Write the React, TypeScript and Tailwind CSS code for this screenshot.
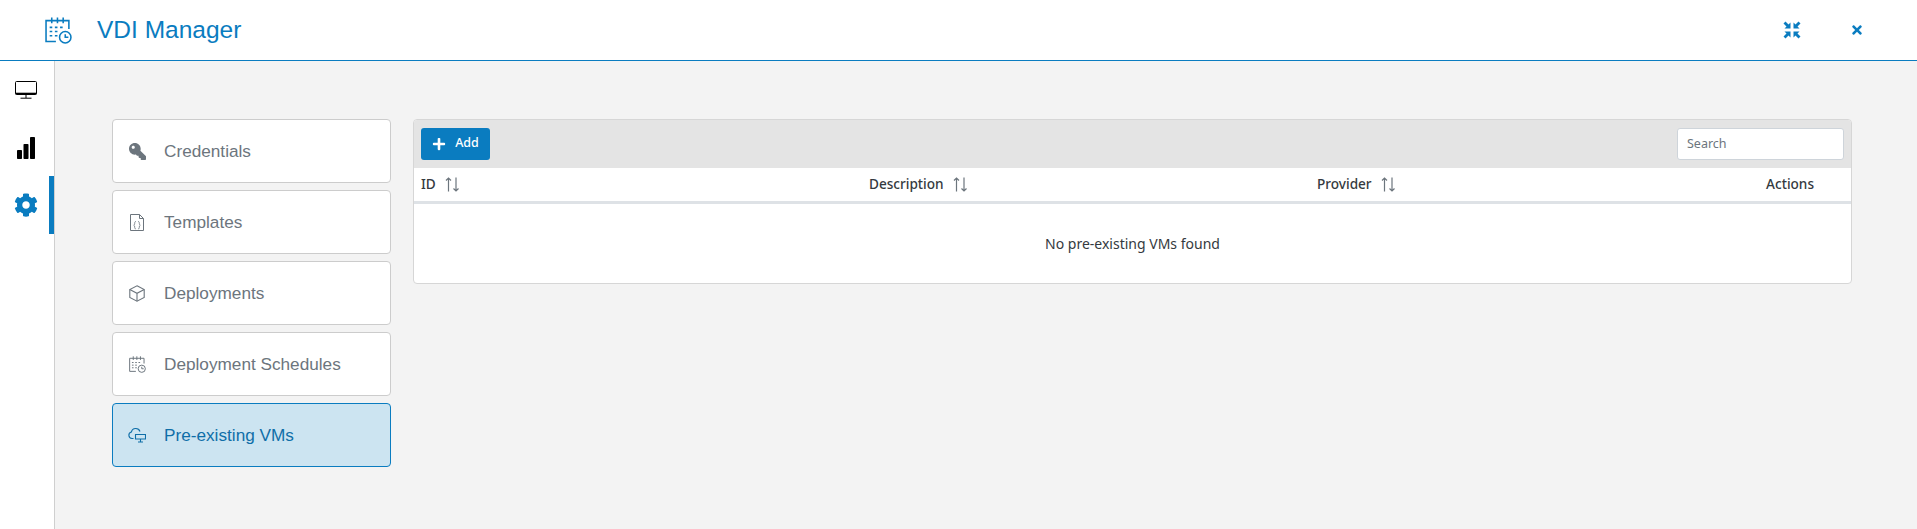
import React from "react";
import { FaKey, FaCog, FaPlus, FaTimes } from "react-icons/fa";

const CalendarClock = ({ className }: { className?: string }) => (
  <svg viewBox="0 0 26 26" className={className} fill="none" stroke="currentColor" strokeWidth="1.500">
    <path d="M10.500 23.500H1V3.500h22V11.500" />
    <path d="M6.500 0.500v5.500M12 0.500v5.500M17.500 0.500v5.500" />
    <path d="M4.500 10h2.500M9.500 10h2.500M14.500 10h2.500M4.500 14h2.500M9.500 14h2.500M4.500 18h2.500M9.500 18h2.500" />
    <circle cx="19.500" cy="19.500" r="5.500" />
    <path d="M19.500 16.500v3h3" />
  </svg>
);

const Monitor = ({ className }: { className?: string }) => (
  <svg viewBox="0 0 22 18" className={className} fill="none" stroke="currentColor">
    <rect x="0.500" y="0.500" width="21" height="13" rx="1" strokeWidth="1" />
    <path d="M0.500 12.500h21" strokeWidth="1.600" />
    <path d="M11 14v3M5.500 17.200h11" strokeWidth="1" />
  </svg>
);

const Bars = ({ className }: { className?: string }) => (
  <svg viewBox="0 0 18 22" className={className} fill="currentColor">
    <rect x="0" y="13" width="5" height="9" rx="0.800" />
    <rect x="6.500" y="7" width="5" height="15" rx="0.800" />
    <rect x="13" y="0" width="5" height="22" rx="0.800" />
  </svg>
);

const CloudMonitor = ({ className }: { className?: string }) => (
  <svg viewBox="0 0 18 16" className={className} fill="none" stroke="currentColor" strokeWidth="1.100">
    <path d="M5.500 11.500H4a3.300 3.300 0 0 1-.6-6.500A4.500 4.500 0 0 1 12 4.500" />
    <path d="M7.500 7.500h10v4.500h-10z" />
    <path d="M12.500 12v2.500M10 15h5" />
  </svg>
);

const FileCode = ({ className }: { className?: string }) => (
  <svg viewBox="0 0 14 17" className={className} fill="none" stroke="currentColor" strokeWidth="1">
    <path d="M0.500 0.500H9.500L13.500 4.500V16.500H0.500Z" />
    <path d="M9.500 0.500V4.500H13.500" />
    <path d="M6 7.500c-1.300 0-1.300.8-1.300 1.800s-.2 1.700-1 1.900c.8.200 1 .9 1 1.900s0 1.800 1.300 1.800M8 7.500c1.300 0 1.300.8 1.300 1.800s.2 1.700 1 1.900c-.8.200-1 .9-1 1.900s0 1.800-1.300 1.800" strokeWidth="0.800" />
  </svg>
);

const Cube = ({ className }: { className?: string }) => (
  <svg viewBox="0 0 16 17" className={className} fill="none" stroke="currentColor" strokeWidth="1.100">
    <path d="M8 0.800 15.200 4.500V12.500L8 16.200 0.800 12.500V4.500Z" />
    <path d="M0.800 4.500 8 8.300 15.200 4.500M8 8.300V16.200" />
  </svg>
);

const Compress = ({ className }: { className?: string }) => (
  <svg viewBox="0 0 18 18" className={className} fill="currentColor">
    <path d="M0.500 2.500 2.500 0.500 5.500 3.500 7.500 1.500V7.500H1.500L3.500 5.500Z" />
    <path d="M17.500 2.500 15.500 0.500 12.500 3.500 10.500 1.500V7.500H16.500L14.500 5.500Z" />
    <path d="M0.500 15.500 2.500 17.500 5.500 14.500 7.500 16.500V10.500H1.500L3.500 12.500Z" />
    <path d="M17.500 15.500 15.500 17.500 12.500 14.500 10.500 16.500V10.500H16.500L14.500 12.500Z" />
  </svg>
);

const SortArrows = () => (
  <svg viewBox="0 0 15 15" className="w-[15px] h-[15px] text-[#6c757d] ml-[9px]" fill="none" stroke="currentColor" strokeWidth="1.200">
    <path d="M3.500 14.500V1M1 3.500 3.500 1 6 3.500" />
    <path d="M11 0.500V14M8.500 11.500 11 14l2.500-2.500" />
  </svg>
);

const menu = [
  { label: "Credentials", icon: <FaKey className="w-[17px] h-[17px] -scale-x-100" /> },
  { label: "Templates", icon: <FileCode className="w-[14px] h-[17px]" /> },
  { label: "Deployments", icon: <Cube className="w-[16px] h-[17px]" /> },
  { label: "Deployment Schedules", icon: <CalendarClock className="w-[17px] h-[17px]" /> },
  { label: "Pre-existing VMs", icon: <CloudMonitor className="w-[18px] h-[16px]" />, active: true },
];

export default function App() {
  return (
    <div className="h-[529px] w-full flex flex-col overflow-hidden bg-[#f3f3f3] font-['Liberation_Sans',Arial,sans-serif]">
      <header className="h-[61px] shrink-0 bg-white border-b border-[#0a7cc0] flex items-center pl-[45px] pr-[53px] text-[#0a7cc0]">
        <CalendarClock className="w-[27px] h-[27px]" />
        <h1 className="ml-[25px] text-[24.500px] leading-none">VDI Manager</h1>
        <div className="ml-auto flex items-center gap-[49px]">
          <Compress className="w-[18px] h-[18px]" />
          <FaTimes className="w-[14px] h-[14px]" />
        </div>
      </header>
      <div className="flex flex-1 min-h-0">
        <nav className="w-[55px] shrink-0 bg-white border-r border-[#cfcfcf] flex flex-col">
          <div className="h-[58px] flex items-center justify-center pr-[3px] text-black">
            <Monitor className="w-[22px] h-[18px]" />
          </div>
          <div className="h-[57px] flex items-center justify-center pr-[3px] text-black">
            <Bars className="w-[18px] h-[22px]" />
          </div>
          <div className="h-[58px] flex items-center justify-center pr-[3px] text-[#0a7cc0] relative">
            <FaCog className="w-[24px] h-[24px]" />
            <span className="absolute right-0 top-0 bottom-0 w-[5px] bg-[#0a7cc0]" />
          </div>
        </nav>
        <main className="flex-1 flex items-start pt-[58px] pl-[57px] pr-[65px]">
          <div className="w-[279px] shrink-0 flex flex-col gap-[7px]">
            {menu.map((m) => (
              <div
                key={m.label}
                className={
                  m.active
                    ? "h-[64px] rounded-[4px] border border-[#0a7cc0] bg-[#cce4f1] flex items-center text-[#0f6ea8]"
                    : "h-[64px] rounded-[4px] border border-[#cccccc] bg-white flex items-center text-[#6c757d]"
                }
              >
                <span className="w-[18px] ml-[15px] flex justify-center">{m.icon}</span>
                <span className="ml-[18px] pt-[1px] text-[17.200px] leading-none">{m.label}</span>
              </div>
            ))}
          </div>
          <section className="ml-[22px] flex-1 h-[165px] rounded-[4px] border border-[#d6d6d6] bg-white overflow-hidden font-['Noto_Sans',sans-serif] text-[#343a40]">
            <div className="h-[48px] pb-[1px] bg-[#e4e4e4] flex items-center justify-between px-[7px]">
              <button className="h-[32px] w-[69px] rounded-[3px] bg-[#0a7cc0] text-white flex items-center justify-center text-[12.500px] font-medium">
                <FaPlus className="w-[14px] h-[14px] mr-[9px]" />
                Add
              </button>
              <input
                placeholder="Search"
                className="h-[32px] w-[167px] rounded-[3px] border border-[#ced4da] bg-white px-[9px] text-[12.500px] placeholder:text-[#6c757d]"
              />
            </div>
            <div className="h-[36px] border-b-[3px] border-[#dee2e6] grid grid-cols-[448px_448px_1fr_auto] items-center pl-[7px] pr-[37px] text-[13.600px] font-medium">
              <div className="flex items-center">ID<SortArrows /></div>
              <div className="flex items-center">Description<SortArrows /></div>
              <div className="flex items-center">Provider<SortArrows /></div>
              <div>Actions</div>
            </div>
            <div className="h-[79px] pb-[1px] flex items-center justify-center text-[14px]">No pre-existing VMs found</div>
          </section>
        </main>
      </div>
    </div>
  );
}
